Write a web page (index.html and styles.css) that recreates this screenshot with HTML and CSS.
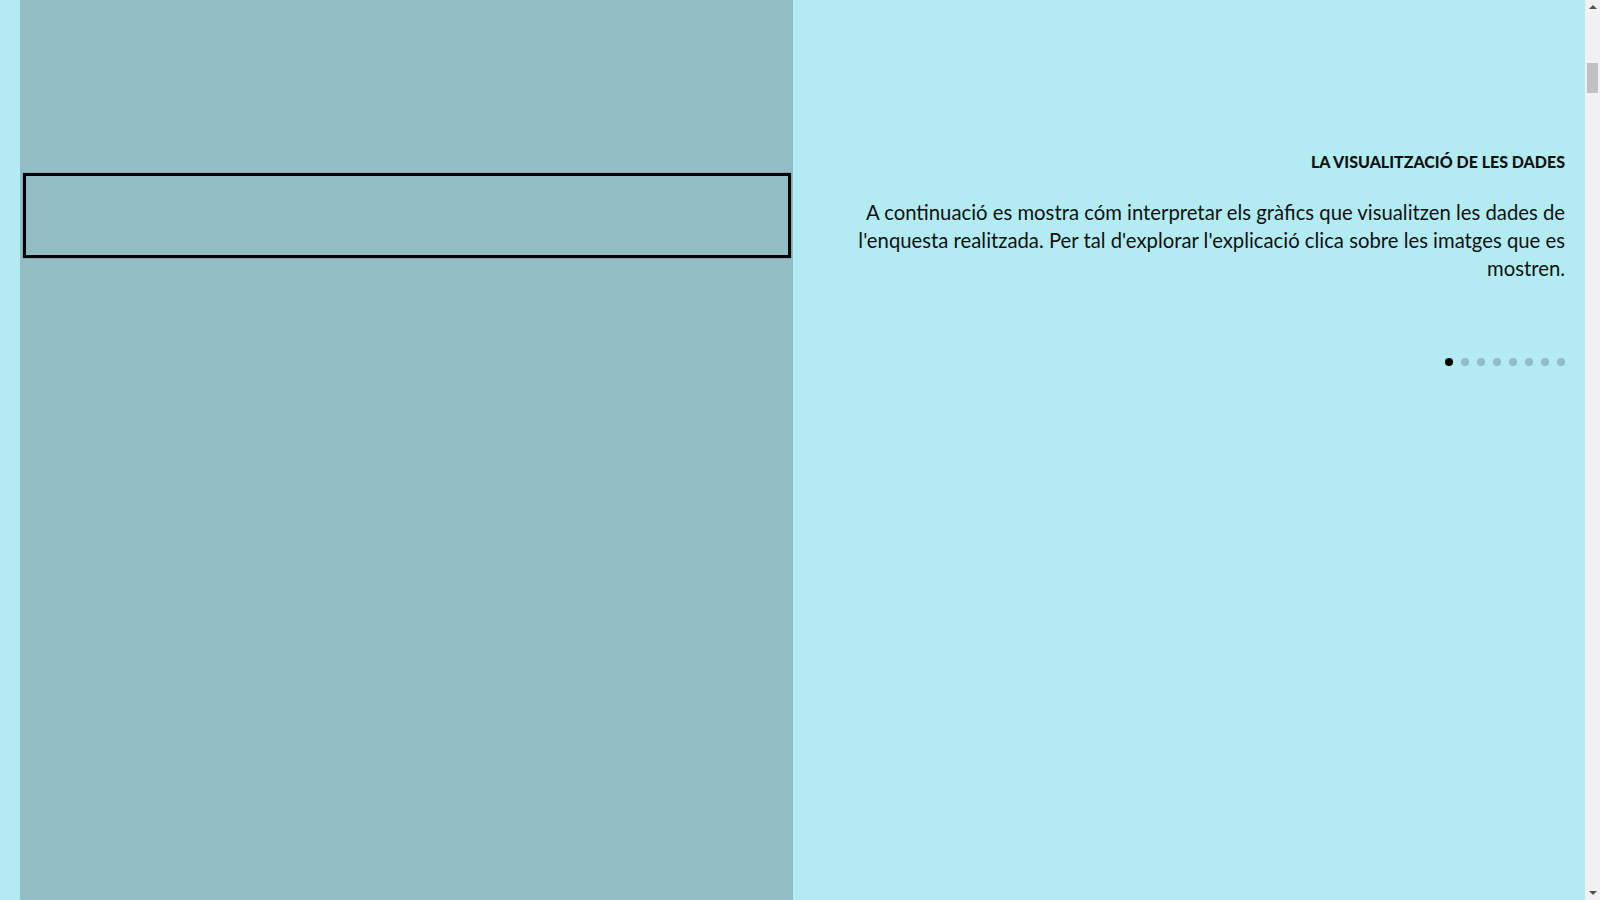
FILE: index.html
```html
<!DOCTYPE html>
<html lang="ca">
<head>
<meta charset="utf-8">
<title>La visualització de les dades</title>
<link rel="stylesheet" href="styles.css">
</head>
<body>
<main class="stage">
  <section class="graphic">
    <div class="frame"></div>
  </section>
  <section class="steps">
    <article class="step">
      <h2 class="step-title">LA VISUALITZACIÓ DE LES DADES</h2>
      <p class="step-text">A continuació es mostra cóm interpretar els gràfics que visualitzen les dades de l'enquesta realitzada. Per tal d'explorar l'explicació clica sobre les imatges que es mostren.</p>
      <ul class="dots">
        <li class="dot active"></li>
        <li class="dot"></li>
        <li class="dot"></li>
        <li class="dot"></li>
        <li class="dot"></li>
        <li class="dot"></li>
        <li class="dot"></li>
        <li class="dot"></li>
      </ul>
    </article>
  </section>
  <aside class="scrollbar" aria-hidden="true">
    <span class="sb-arrow sb-up"></span>
    <div class="sb-track"><div class="sb-thumb"></div></div>
    <span class="sb-arrow sb-down"></span>
  </aside>
</main>
</body>
</html>
```

FILE: styles.css
```css
html, body {
  margin: 0;
  height: 100%;
  overflow: hidden;
}
body {
  background: #b3ebf3;
  font-family: "Lato", "Open Sans", sans-serif;
  color: #111;
}
.stage {
  height: 100vh;
  display: flex;
  padding-left: 20px;
}
.graphic {
  width: 773px;
  flex: none;
  background: #92bdc5;
  padding-top: 173px;
  padding-left: 3px;
  padding-right: 2px;
  box-sizing: border-box;
}
.frame {
  height: 85px;
  border: 3px solid #000;
  box-sizing: border-box;
  box-shadow: 0 0 1px rgba(0,0,0,0.6);
}
.steps {
  flex: 1;
  padding: 152px 20px 0 56px;
}
.step {
  text-align: right;
}
.step-title {
  margin: 0;
  font-size: 16px;
  font-weight: 900;
  line-height: 20px;
}
.step-text {
  margin: 26px 0 0;
  font-size: 20.3px;
  line-height: 28px;
}
.dots {
  list-style: none;
  margin: 76px 0 0;
  padding: 0;
  display: flex;
  justify-content: flex-end;
  gap: 8px;
}
.dot {
  width: 8px;
  height: 8px;
  border-radius: 50%;
  background: #93bcc4;
}
.dot.active {
  background: #000;
}
.scrollbar {
  width: 15px;
  flex: none;
  background: #f1f1f1;
  display: flex;
  flex-direction: column;
  align-items: center;
}
.sb-arrow {
  width: 0;
  height: 0;
  border-left: 4px solid transparent;
  border-right: 4px solid transparent;
  margin: 5px 0;
}
.sb-up {
  border-bottom: 4px solid #505050;
}
.sb-down {
  border-top: 4px solid #505050;
}
.sb-track {
  flex: 1;
  width: 100%;
  padding-top: 49px;
  box-sizing: border-box;
}
.sb-thumb {
  width: 11px;
  height: 30px;
  margin: 0 auto;
  background: #c1c1c1;
}
```
